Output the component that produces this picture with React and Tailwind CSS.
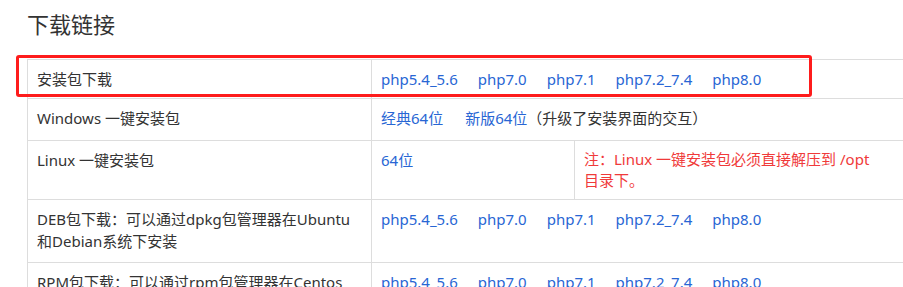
const versions = ['php5.4_5.6', 'php7.0', 'php7.1', 'php7.2_7.4', 'php8.0']

function Links() {
  return (
    <span className="flex gap-[20px]">
      {versions.map((v) => (
        <a key={v} href="#" className="text-[#2866d4]">
          {v}
        </a>
      ))}
    </span>
  )
}

export default function App() {
  const cell = 'border border-[#dddddd] align-top pl-[9px] pr-[10px] pt-[8px]'
  return (
    <div
      className="relative w-[903px] h-[287px] overflow-hidden bg-white text-[#333333] text-[15px] leading-[22px]"
      style={{ fontFamily: '"Noto Sans", "Noto Sans CJK SC", sans-serif' }}
    >
      <h2 className="pl-[27px] pt-[9px] text-[22px] leading-[30px] font-normal">下载链接</h2>

      <table className="mt-[20px] ml-[27px] w-[900px] border-collapse table-fixed">
        <colgroup>
          <col className="w-[344px]" />
          <col className="w-[203px]" />
          <col />
        </colgroup>
        <tbody>
          <tr>
            <td className={`${cell} pb-[8px]`}>安装包下载</td>
            <td className={`${cell} pb-[8px]`} colSpan={2}>
              <Links />
            </td>
          </tr>
          <tr>
            <td className={`${cell} pb-[11px]`}>Windows 一键安装包</td>
            <td className={`${cell} pb-[11px]`} colSpan={2}>
              <a href="#" className="text-[#2866d4] mr-[22px]">经典64位</a>
              <a href="#" className="text-[#2866d4]">新版64位</a>
              <span>（升级了安装界面的交互）</span>
            </td>
          </tr>
          <tr>
            <td className={`${cell} pb-[8px]`}>Linux 一键安装包</td>
            <td className={`${cell} pb-[8px]`}>
              <a href="#" className="text-[#2866d4]">64位</a>
            </td>
            <td className={`${cell} pb-[8px] text-[#f03a3a] leading-[21px]`}>
              注：Linux 一键安装包必须直接解压到 /opt
              <br />
              目录下。
            </td>
          </tr>
          <tr>
            <td className={`${cell} pb-[10px]`}>
              DEB包下载：可以通过dpkg包管理器在Ubuntu
              <br />
              和Debian系统下安装
            </td>
            <td className={`${cell} pb-[10px]`} colSpan={2}>
              <Links />
            </td>
          </tr>
          <tr>
            <td className={`${cell} pb-[10px]`}>
              RPM包下载：可以通过rpm包管理器在Centos
              <br />
              和Redhat系统下安装
            </td>
            <td className={`${cell} pb-[10px]`} colSpan={2}>
              <Links />
            </td>
          </tr>
        </tbody>
      </table>

      {/* highlight box over the first row */}
      <div className="absolute left-[16px] top-[55px] w-[796px] h-[42px] border-[3px] border-[#fe1c1c] rounded-[3px]" />
    </div>
  )
}
